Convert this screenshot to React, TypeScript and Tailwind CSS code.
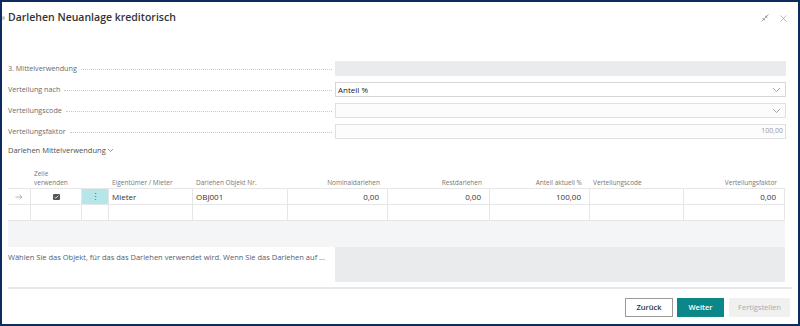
import { X } from 'lucide-react'

const FONT = "font-['Open_Sans','Noto_Sans',sans-serif]"
const COLS = 'grid grid-cols-[23px_51px_27px_84px_95px_100px_102px_100px_94px_101px]'

function Chevron() {
  return (
    <svg width="9" height="6" viewBox="0 0 9 6" className="text-[#9a9a9a]">
      <path d="M1 1l3.5 3.5L8 1" fill="none" stroke="currentColor" strokeWidth="0.9" />
    </svg>
  )
}

function FieldRow({ label, children }: { label: string; children: React.ReactNode }) {
  return (
    <div className="flex h-[15px] items-center">
      <div className="flex w-[327px] items-center pr-[3px]">
        <span className="whitespace-nowrap text-[7.2px] text-[#6b6b6b]">{label}</span>
        <span className="ml-[4px] mt-[3px] flex-1 border-b border-dotted border-[#c9c9c9]" />
      </div>
      <div className="flex-1 self-stretch">{children}</div>
    </div>
  )
}

function Cell({ children, className = '' }: { children?: React.ReactNode; className?: string }) {
  return (
    <div className={`flex h-[16px] items-center border-r border-b border-[#e6e6e6] px-[3px] text-[8px] text-[#333] ${className}`}>
      {children}
    </div>
  )
}

export default function App() {
  const head = 'flex items-end pb-[1px] px-[3px] text-[6.5px] leading-[9px] text-[#777]'
  return (
    <div className={`${FONT} flex h-[326px] w-[800px] flex-col overflow-hidden border-2 border-[#0d2b5e] bg-white`}>
      <header className="flex h-[32px] items-center pl-[6px] pr-[9px]">
        <span className="-ml-[6px] mr-[3px] h-[4px] w-[3px] rounded-sm bg-[#c8c8c8]" />
        <h1 className="text-[10.5px] font-semibold text-[#333]">Darlehen Neuanlage kreditorisch</h1>
        <div className="ml-auto flex items-center gap-[9px] text-[#8a8a8a]">
          <svg width="8" height="8" viewBox="0 0 8 8">
            <path d="M7.5 0.5L4.6 3.4M4.6 1.6v1.8h1.8M0.5 7.5l2.9-2.9M3.4 6.4V4.6H1.6" fill="none" stroke="currentColor" strokeWidth="0.8" />
          </svg>
          <X size={11} strokeWidth={1.3} />
        </div>
      </header>

      <section className="mt-[27px] flex flex-col gap-[6px] pl-[6px] pr-[12px]">
        <FieldRow label="3. Mittelverwendung">
          <div className="h-full bg-[#eaebed]" />
        </FieldRow>
        <FieldRow label="Verteilung nach">
          <div className="flex h-full items-center justify-between border border-[#d6d6d6] pl-[2px] pr-[4px] text-[8px] text-[#222]">
            <span>Anteil %</span>
            <Chevron />
          </div>
        </FieldRow>
        <FieldRow label="Verteilungscode">
          <div className="flex h-full items-center justify-end border border-[#e0e0e0] bg-[#fcfcfc] pr-[4px]">
            <Chevron />
          </div>
        </FieldRow>
        <FieldRow label="Verteilungsfaktor">
          <div className="flex h-full items-center justify-end border border-[#e0e0e0] bg-[#fcfcfc] pr-[2px] text-[7px] text-[#999]">
            100,00
          </div>
        </FieldRow>
      </section>

      <div className="mt-[4px] flex h-[15px] items-center gap-[1px] pl-[6px] text-[7.5px] text-[#505050]">
        Darlehen Mittelverwendung
        <svg width="7" height="5" viewBox="0 0 7 5" className="text-[#777]">
          <path d="M1 1l2.5 2.5L6 1" fill="none" stroke="currentColor" strokeWidth="0.7" />
        </svg>
      </div>

      <section className="ml-[6px] w-[777px]">
        <div className={`${COLS} h-[30px]`}>
          <div />
          <div className={head}>Zeile<br />verwenden</div>
          <div />
          <div className={head}>Eigentümer / Mieter</div>
          <div className={head}>Darlehen Objekt Nr.</div>
          <div className={`${head} justify-end pr-[8px]`}>Nominaldarlehen</div>
          <div className={`${head} justify-end pr-[8px]`}>Restdarlehen</div>
          <div className={`${head} justify-end pr-[8px]`}>Anteil aktuell %</div>
          <div className={head}>Verteilungscode</div>
          <div className={`${head} justify-end pr-[8px]`}>Verteilungsfaktor</div>
        </div>
        <div className={`${COLS} border-t border-[#e6e6e6]`}>
          <Cell className="justify-center text-[#999]">
            <svg width="8" height="6" viewBox="0 0 8 6">
              <path d="M0.5 3h6.5M4.5 0.7L7 3 4.5 5.3" fill="none" stroke="currentColor" strokeWidth="0.7" />
            </svg>
          </Cell>
          <Cell className="justify-center">
            <span className="flex h-[6px] w-[7px] items-center justify-center rounded-[1px] bg-[#555]">
              <svg width="5" height="4" viewBox="0 0 5 4">
                <path d="M0.6 2.1l1.2 1.1L4.4 0.7" fill="none" stroke="#fff" strokeWidth="0.8" />
              </svg>
            </span>
          </Cell>
          <Cell className="justify-center bg-[#b4e6ea] text-[9px] leading-none text-[#666]">⋮</Cell>
          <Cell>Mieter</Cell>
          <Cell>OBJ001</Cell>
          <Cell className="justify-end pr-[8px]">0,00</Cell>
          <Cell className="justify-end pr-[8px]">0,00</Cell>
          <Cell className="justify-end pr-[8px]">100,00</Cell>
          <Cell />
          <Cell className="justify-end pr-[8px]">0,00</Cell>
          {Array.from({ length: 10 }).map((_, i) => (
            <Cell key={i} />
          ))}
        </div>
        <div className="h-[26px] bg-[#f4f5f7]" />
        <div className="flex h-[35px]">
          <p className="w-[327px] whitespace-nowrap pt-[5px] text-[7.5px] text-[#556070]">
            Wählen Sie das Objekt, für das das Darlehen verwendet wird. Wenn Sie das Darlehen auf ...
          </p>
          <div className="flex-1 bg-[#eaebed]" />
        </div>
      </section>

      <div className="ml-[6px] mr-[6px] mt-[5px] h-[2px] bg-[#e8e8e8]" />

      <footer className="mt-[9px] flex h-[19px] justify-end gap-[4px] pr-[8px] text-[7.5px] font-semibold">
        <button type="button" className="w-[48px] border border-[#9a9a9a] bg-white text-[#333]">Zurück</button>
        <button type="button" className="w-[47px] bg-[#0b8789] text-white">Weiter</button>
        <button type="button" className="ml-[1px] w-[61px] bg-[#f0f0f1] font-normal text-[#aaa]">Fertigstellen</button>
      </footer>
    </div>
  )
}
